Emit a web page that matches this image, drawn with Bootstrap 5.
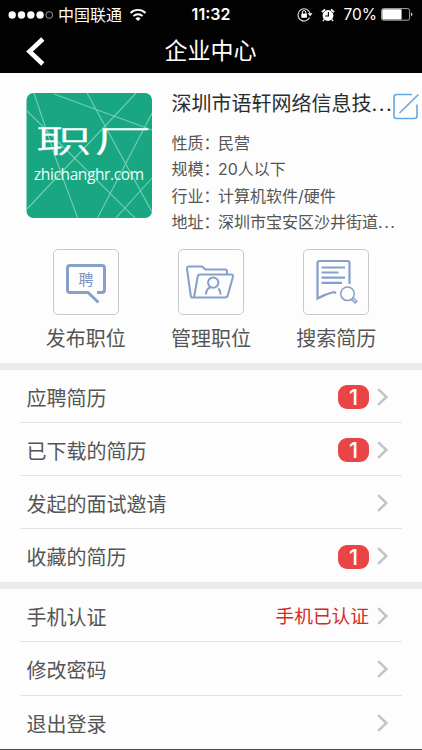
<!DOCTYPE html>
<html lang="zh-CN">
<head>
<meta charset="utf-8">
<meta name="viewport" content="width=device-width, initial-scale=1">
<title>企业中心</title>
<link href="https://cdn.jsdelivr.net/npm/bootstrap@5.3.0/dist/css/bootstrap.min.css" rel="stylesheet">
<style>
  body { font-family: Inter, "Noto Sans CJK SC", sans-serif; background: #fdfdfd; color: #555; height: 750px; overflow: hidden; }
  svg { display: block; flex: none; }
  .topbar { height: 73px; background: #020202; }
  .status { height: 29px; padding: 0 8px; font-size: 16px; line-height: 29px; }
  .status > * { flex: 1 1 0; }
  .status .clock { flex: 0 0 auto; font-weight: 600; }
  .carrier { margin: 1px 7px 0 4px; }
  .percent { font-size: 15.5px; margin: 0 4px 0 8px; }
  .titlebar { height: 44px; padding: 0 26px; }
  .titlebar h1 { font-size: 23px; line-height: 44px; }
  .titlebar > span { width: 20px; }
  .profile { height: 165px; padding: 20px 0 0 26px; }
  .info { margin-left: 19.5px; width: 250px; }
  .company { font-size: 20px; line-height: 28px; color: #2c2c2c; margin-top: -3px; width: 220.5px; }
  .dots { letter-spacing: 1.5px; }
  .facts { font-size: 16px; line-height: 26.4px; margin-top: 8px; }
  .facts dt { width: 46.5px; }
  .facts dd { width: 180px; }
  .shortcuts { padding: 11px 23px 0; height: 125px; }
  .shortcut { width: 125.3px; color: #555; font-size: 20px; line-height: 28px; }
  .tile { width: 66px; height: 66px; border: 1px solid #c8c8cc; border-radius: 5px; margin-bottom: 10px; }
  .band { height: 7px; background: #eaeaea; }
  .menu { --bs-list-group-bg: transparent; --bs-list-group-color: #555; margin: 0 20px; font-size: 20px; line-height: 28px; }
  .menu .list-group-item { height: 53.1px; padding: 0 13px 0 6.5px; border-color: #e3e3e3; }
  .menu .me-auto { padding-top: 5px; }
  .tally { --bs-badge-font-size: 22px; --bs-badge-font-weight: 500; --bs-badge-border-radius: 9px; --bs-badge-padding-x: 0; --bs-badge-padding-y: 0; width: 31px; height: 24px; line-height: 25px; margin: 2px 1px 0 0; background: #e94446; }
  .verified { color: #d52a27; font-size: 18.7px; padding-top: 4px; margin-right: 1px; }
  .arrow { margin: 1px 0 0 7px; }
  .endline { height: 1px; background: #4b4b4b; }
</style>
<script src="https://cdn.jsdelivr.net/npm/bootstrap@5.3.0/dist/js/bootstrap.bundle.min.js"></script>
</head>
<body class="d-flex flex-column">
<svg width="0" height="0" class="d-none">
  <symbol id="chevron" viewBox="0 0 12 18"><path d="M1.200 1.200 9.300 9l-8.100 7.800" fill="none" stroke="#c3c3c7" stroke-width="2.500"/></symbol>
</svg>

<header class="topbar text-white flex-shrink-0">
  <div class="status d-flex align-items-center">
    <div class="d-flex align-items-center">
      <svg width="46" height="10" viewBox="0 0 46 10"><g fill="#fff"><circle cx="4.200" cy="5" r="3.700"/><circle cx="13.500" cy="5" r="3.700"/><circle cx="22.800" cy="5" r="3.700"/><circle cx="32.100" cy="5" r="3.700"/></g><circle cx="41.300" cy="5" r="3.400" fill="none" stroke="#bbb" stroke-width=".8"/></svg>
      <span class="carrier">中国联通</span>
      <svg width="18" height="14" viewBox="0 0 18 14" fill="none" stroke="#fff" stroke-width="1.800"><path d="M1.500 5a10.700 10.700 0 0 1 15 0M4.400 8.100a6.600 6.600 0 0 1 9.200 0"/><path d="m9 13-2.600-2.600a3.800 3.800 0 0 1 5.200 0z" fill="#fff" stroke="none"/></svg>
    </div>
    <span class="clock">11:32</span>
    <div class="d-flex align-items-center justify-content-end">
      <svg width="16" height="15" viewBox="0 0 16 15"><path d="M12.600 10.600A6.100 6.100 0 1 1 13 6.400" fill="none" stroke="#ddd" stroke-width="1.100"/><path d="m10.600 6.200 4.900 0-2.400 3z" fill="#fff"/><rect x="4.300" y="6.600" width="5.600" height="4.200" rx=".5" fill="#fff"/><path d="M5.400 6.800V5.300a1.700 1.700 0 0 1 3.400 0v1.500" fill="none" stroke="#fff"/></svg>
      <svg width="14" height="14" viewBox="0 0 14 14" class="ms-2"><circle cx="7" cy="7.500" r="5.400" fill="#fff"/><path d="M1 4.200 4 1.300M13 4.200 10 1.300" stroke="#fff" stroke-width="1.800"/><path d="m3.200 11.400-1.300 1.700m8.900-1.700 1.300 1.700" stroke="#fff" stroke-width="1.300"/><path d="M7.400 4v4H4.200" fill="none" stroke="#000" stroke-width="1.100"/></svg>
      <span class="percent">70%</span>
      <svg width="33" height="13" viewBox="0 0 33 13"><rect x=".6" y=".6" width="28" height="11.600" rx="1.800" fill="none" stroke="#aaa"/><rect x="1.300" y="1.300" width="19.300" height="10.200" rx=".8" fill="#fff"/><path d="M30 4.500q3 1.900 0 3.800z" fill="#ddd"/></svg>
    </div>
  </div>
  <div class="titlebar d-flex align-items-center justify-content-between">
    <svg width="19" height="29" viewBox="0 0 19 29"><path d="M16.800 2 3.500 14.500 16.800 27" fill="none" stroke="#fff" stroke-width="4.600"/></svg>
    <h1 class="m-0 fw-normal">企业中心</h1>
    <span></span>
  </div>
</header>

<section class="profile d-flex flex-shrink-0">
  <svg width="126" height="126" viewBox="0 0 126 126">
    <defs><clipPath id="tileClip"><rect x=".5" width="125.500" height="125" rx="7"/></clipPath></defs>
    <g clip-path="url(#tileClip)">
      <rect width="126" height="126" fill="#19a783"/>
      <path d="M8 0 31 69 52 126M28 1l98 36M61 0l65 119M110 0 1 116M0 17l110 109M126 20 71 126M126 85l-37 41" fill="none" stroke="#71d0b3" stroke-width="1.100"/>
    </g>
    <g fill="#fff" stroke="#fff" stroke-width=".5" font-family="'Noto Sans CJK SC', sans-serif" font-weight="300" font-size="31">
      <text transform="translate(10 59.300) scale(1.780 1)">职</text>
      <text transform="translate(68.500 59.300) scale(1.840 1)">厂</text>
    </g>
    <text x="8" y="86.500" fill="#e9fff8" font-family="'Open Sans', sans-serif" font-size="15.500" textLength="110" lengthAdjust="spacing">zhichanghr.com</text>
  </svg>
  <div class="info">
    <div class="d-flex">
      <div class="company text-nowrap">深圳市语轩网络信息技<span class="dots">...</span></div>
      <svg width="28" height="29" viewBox="0 0 28 29" fill="none" stroke="#68a7df" stroke-width="1.600"><path d="M20 1.500H4.500Q2 1.500 2 4v19q0 2.500 2.500 2.500h18q2.500 0 2.500-2.500V11.500M7.500 20 26.500 1.500"/></svg>
    </div>
    <dl class="facts mb-0 text-nowrap">
      <div class="d-flex"><dt class="fw-normal">性质：</dt><dd class="m-0">民营</dd></div>
      <div class="d-flex"><dt class="fw-normal">规模：</dt><dd class="m-0">20人以下</dd></div>
      <div class="d-flex"><dt class="fw-normal">行业：</dt><dd class="m-0">计算机软件/硬件</dd></div>
      <div class="d-flex"><dt class="fw-normal">地址：</dt><dd class="m-0">深圳市宝安区沙井街道<span class="dots">...</span></dd></div>
    </dl>
  </div>
</section>

<nav class="shortcuts d-flex flex-shrink-0">
  <a href="#" class="shortcut d-flex flex-column align-items-center text-decoration-none">
    <span class="tile d-flex">
      <svg width="64" height="64" viewBox="0 0 64 64"><path d="M43 42.500h5q2.500 0 2.500-2.500V18q0-2.500-2.500-2.500H16q-2.500 0-2.500 2.500v22q0 2.500 2.500 2.500h18L44.500 52.500" fill="none" stroke="#86a0c9" stroke-width="3"/><text x="24.500" y="34.500" font-size="15" font-family="'Noto Sans CJK SC', sans-serif" fill="#7794c2">聘</text></svg>
    </span>发布职位
  </a>
  <a href="#" class="shortcut d-flex flex-column align-items-center text-decoration-none">
    <span class="tile d-flex">
      <svg width="64" height="64" viewBox="0 0 64 64" fill="none" stroke="#86a0c9" stroke-width="2"><path d="M12 47.500 8 19q-.3-2.500 2-2.500h13l3.500 3H46q2 0 2 2v2.500M12 47.500h34q2.300 0 2.900-2.500l5-18q.6-2.500-2-2.500H21q-2 0-2.300 2L15 47.500"/><circle cx="34.200" cy="32.600" r="5.200"/><path d="M27 44.500q0-5.300 4.500-7.500m8 1.500q2 2.300 2 6"/></svg>
    </span>管理职位
  </a>
  <a href="#" class="shortcut d-flex flex-column align-items-center text-decoration-none">
    <span class="tile d-flex">
      <svg width="64" height="64" viewBox="0 0 64 64" fill="none" stroke="#86a0c9" stroke-width="2.200"><path d="M45.500 34V13q0-2-2-2h-28q-2 0-2 2v35.500q8.500-4.800 16.500-6.500l2 1.300"/><path d="M17.500 17.500H41m-23.500 5H34.500m-17 5.200H41m-23.500 5.200H38"/><circle cx="43.500" cy="43.800" r="6.800" stroke-width="1.500"/><path d="m47.500 49.500 3.500 3.500 1.800-1.800-3.600-3" stroke-width="1.500"/></svg>
    </span>搜索简历
  </a>
</nav>

<div class="band flex-shrink-0"></div>
<div class="menu list-group list-group-flush flex-shrink-0">
  <a href="#" class="list-group-item d-flex align-items-center"><span class="me-auto">应聘简历</span><span class="badge tally">1</span><svg class="arrow" width="12" height="18"><use href="#chevron"/></svg></a>
  <a href="#" class="list-group-item d-flex align-items-center"><span class="me-auto">已下载的简历</span><span class="badge tally">1</span><svg class="arrow" width="12" height="18"><use href="#chevron"/></svg></a>
  <a href="#" class="list-group-item d-flex align-items-center"><span class="me-auto">发起的面试邀请</span><svg class="arrow" width="12" height="18"><use href="#chevron"/></svg></a>
  <a href="#" class="list-group-item d-flex align-items-center"><span class="me-auto">收藏的简历</span><span class="badge tally">1</span><svg class="arrow" width="12" height="18"><use href="#chevron"/></svg></a>
</div>
<div class="band flex-shrink-0"></div>
<div class="menu list-group list-group-flush flex-shrink-0">
  <a href="#" class="list-group-item d-flex align-items-center"><span class="me-auto">手机认证</span><span class="verified">手机已认证</span><svg class="arrow" width="12" height="18"><use href="#chevron"/></svg></a>
  <a href="#" class="list-group-item d-flex align-items-center"><span class="me-auto">修改密码</span><svg class="arrow" width="12" height="18"><use href="#chevron"/></svg></a>
  <a href="#" class="list-group-item d-flex align-items-center"><span class="me-auto">退出登录</span><svg class="arrow" width="12" height="18"><use href="#chevron"/></svg></a>
</div>
<div class="endline mt-auto flex-shrink-0"></div>
</body>
</html>
